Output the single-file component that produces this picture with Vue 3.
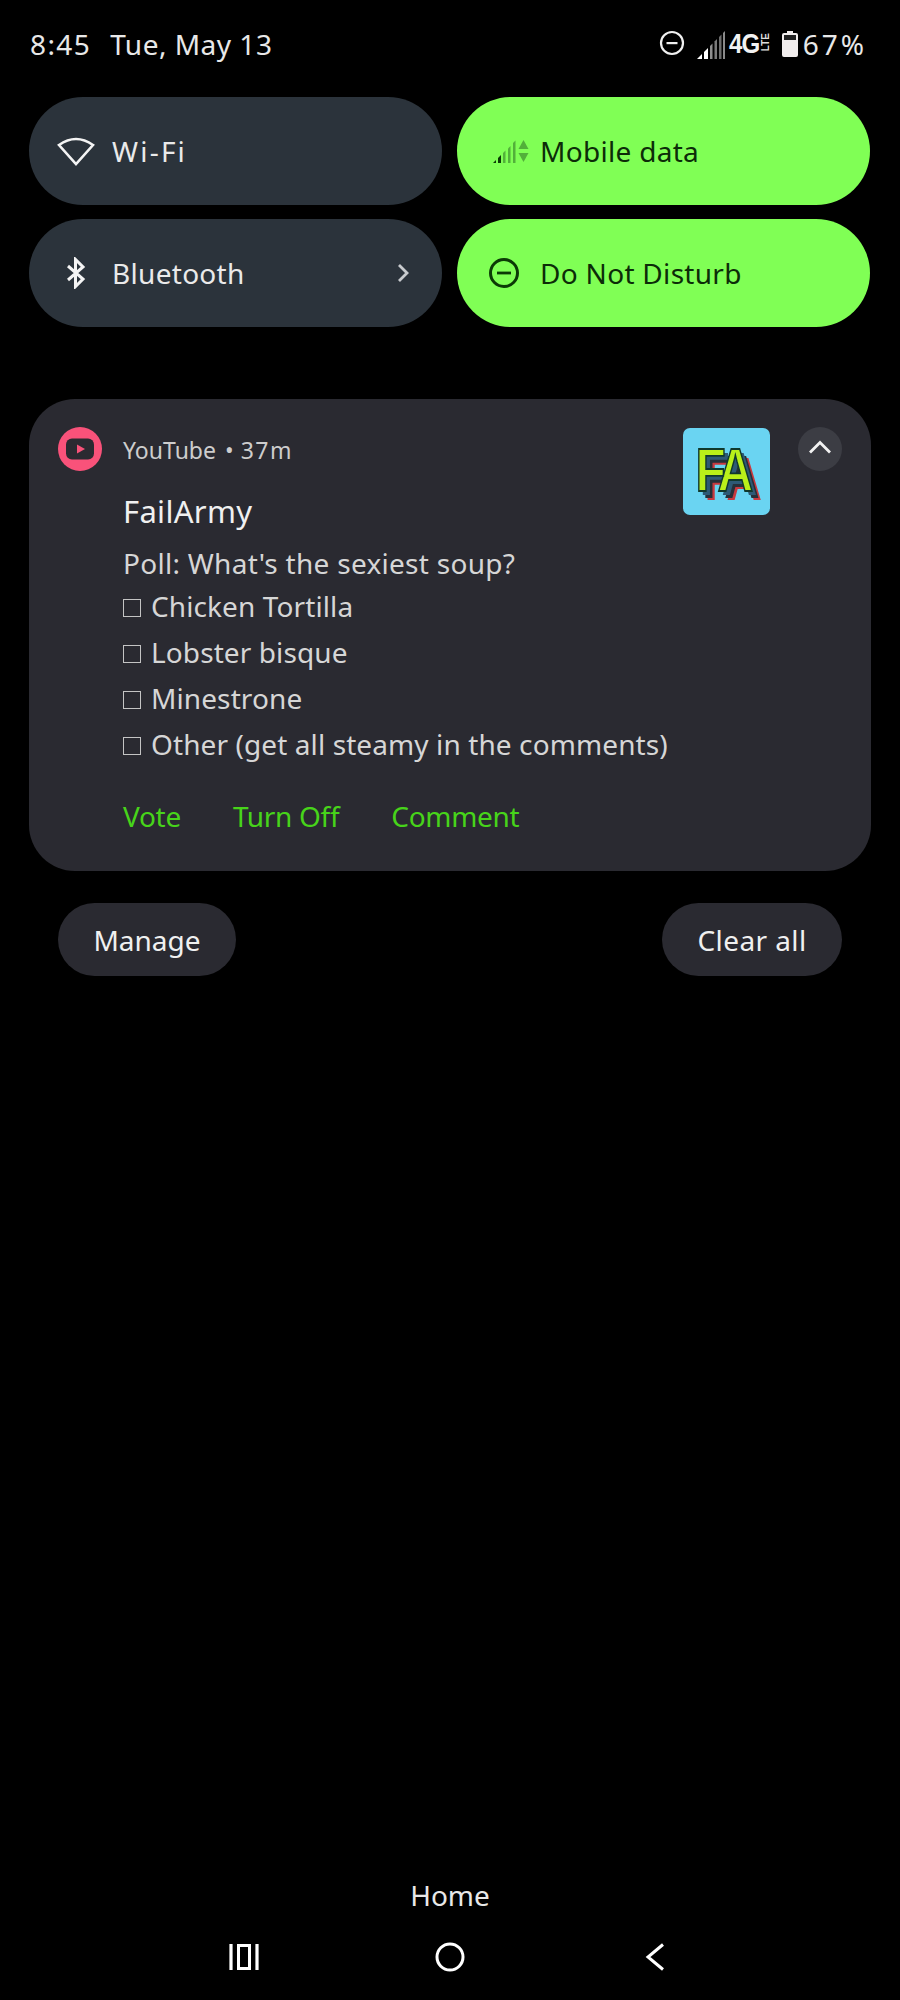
<template>
  <div class="page">
    <div class="status">
      <span class="time">8:45</span>
      <span class="date">Tue, May 13</span>
      <svg class="st-dnd" width="26" height="26" viewBox="0 0 26 26">
        <circle cx="13" cy="13" r="11" fill="none" stroke="#f0f0f0" stroke-width="2.2" />
        <rect x="7.5" y="12" width="11" height="2.2" fill="#f0f0f0" />
      </svg>
      <svg class="st-signal" width="28" height="28" viewBox="0 0 28 28">
        <path d="M0 28 L5 23 V28 Z" fill="#fff" />
        <path d="M7 21 L11 17 V28 H7 Z" fill="#fff" />
        <path d="M13 15 L15.500 12.500 V28 H13 Z" fill="#8e8e8e" />
        <path d="M17.500 10.500 L20 8 V28 H17.500 Z" fill="#7a7a7a" />
        <path d="M22 6 L24.500 3.500 V28 H22 Z" fill="#6d6d6d" />
        <path d="M26 2 L28 0 V28 H26 Z" fill="#8a8a8a" />
      </svg>
      <span class="st-4g">4G</span>
      <span class="st-lte">LTE</span>
      <svg class="st-batt" width="16" height="26" viewBox="0 0 16 26">
        <path d="M5 0 H11 V2 H14 Q16 2 16 4 V24 Q16 26 14 26 H2 Q0 26 0 24 V4 Q0 2 2 2 H5 Z" fill="#f2eeee" />
        <rect x="2" y="4" width="12" height="5" fill="#222" />
      </svg>
      <span class="st-pct">67%</span>
    </div>

    <div class="tiles">
      <div class="tile">
        <div class="tile-icon">
          <svg width="38" height="30" viewBox="0 0 38 30">
            <path d="M2 9 Q19 -3 36 9 L19 28 Z" fill="none" stroke="#f4f4f4" stroke-width="2.600" stroke-linejoin="miter" />
          </svg>
        </div>
        <span class="tile-label wifi">Wi-Fi</span>
      </div>
      <div class="tile on">
        <div class="tile-icon">
          <svg class="mobile-icon" width="36" height="24" viewBox="0 0 36 24">
            <path d="M0 24 L3 21 V24 Z" fill="#0c3a06" />
            <path d="M5 19 L8 16 V24 H5 Z" fill="#0c3a06" />
            <path d="M10 14 L12.500 11.500 V24 H10 Z" fill="#52b03a" />
            <path d="M15 9.500 L17.500 7 V24 H15 Z" fill="#52b03a" />
            <path d="M20 4 L22.500 1.500 V24 H20 Z" fill="#52b03a" />
            <path d="M25.500 10 L30.500 1 L35.500 10 Z" fill="#52b03a" />
            <path d="M25.500 14 L30.500 23 L35.500 14 Z" fill="#52b03a" />
          </svg>
        </div>
        <span class="tile-label">Mobile data</span>
      </div>
      <div class="tile">
        <div class="tile-icon">
          <svg width="20" height="32" viewBox="0 0 20 32">
            <path d="M2 9 L17 22 L9.500 29.500 V2.500 L17 10 L2 23" fill="none" stroke="#f4f4f4" stroke-width="3" stroke-linejoin="miter" />
          </svg>
        </div>
        <span class="tile-label">Bluetooth</span>
        <svg class="tile-more" width="12" height="20" viewBox="0 0 12 20">
          <path d="M2 2 L10 10 L2 18" fill="none" stroke="#c8cbce" stroke-width="2.800" />
        </svg>
      </div>
      <div class="tile on">
        <div class="tile-icon">
          <svg width="32" height="32" viewBox="0 0 32 32">
            <circle cx="16" cy="16" r="13.500" fill="none" stroke="#0c3a06" stroke-width="3" />
            <rect x="9" y="14.600" width="14" height="2.800" fill="#0c3a06" />
          </svg>
        </div>
        <span class="tile-label">Do Not Disturb</span>
      </div>
    </div>

    <div class="card">
      <div class="app-icon">
        <svg width="28" height="22" viewBox="0 0 28 22">
          <rect width="28" height="21" y="0.500" rx="6" fill="#2a2a31" />
          <path d="M11 6.500 L19 11 L11 15.500 Z" fill="#f9527a" />
        </svg>
      </div>
      <div class="card-body">
        <div class="app-line">YouTube<span class="dot">•</span><span class="ago">37m</span></div>
        <div class="title">FailArmy</div>
        <div class="msg first">Poll: What's the sexiest soup?</div>
        <div v-for="opt in options" :key="opt" class="msg opt">
          <span class="box"></span>
          <span>{{ opt }}</span>
        </div>
        <div class="actions">
          <span v-for="a in actions" :key="a">{{ a }}</span>
        </div>
      </div>
      <div class="thumb">
        <span class="fa">FA</span>
      </div>
      <div class="collapse">
        <svg width="24" height="14" viewBox="0 0 24 14">
          <path d="M2 12.500 L12 2.500 L22 12.500" fill="none" stroke="#f2f2f2" stroke-width="2.800" />
        </svg>
      </div>
    </div>

    <div class="footer-btns">
      <div class="pill-btn manage">Manage</div>
      <div class="pill-btn clear">Clear all</div>
    </div>

    <div class="nav">
      <div class="nav-label">Home</div>
      <div class="nav-icons">
        <svg width="30" height="26" viewBox="0 0 30 26">
          <path d="M2 0 V26 M28 0 V26" stroke="#fff" stroke-width="3.200" fill="none" />
          <rect x="9.500" y="1.500" width="11" height="23" stroke="#fff" stroke-width="3" fill="none" />
        </svg>
        <svg width="30" height="30" viewBox="0 0 30 30">
          <circle cx="15" cy="15" r="13" stroke="#fff" stroke-width="3" fill="none" />
        </svg>
        <svg class="back" width="20" height="28" viewBox="0 0 20 28">
          <path d="M18 1.500 L3 14 L18 26.500" stroke="#fff" stroke-width="3" fill="none" />
        </svg>
      </div>
    </div>
  </div>
</template>

<script setup>
const options = [
  "Chicken Tortilla",
  "Lobster bisque",
  "Minestrone",
  "Other (get all steamy in the comments)",
];
const actions = ["Vote", "Turn Off", "Comment"];
</script>

<style>
html,
body {
  background: #000;
}
</style>

<style scoped>
.page {
  width: 900px;
  height: 2000px;
  background: #000;
  display: flex;
  flex-direction: column;
  font-family: "Noto Sans", sans-serif;
  color: #eee;
  overflow: hidden;
}
.status {
  height: 97px;
  padding: 24px 33px 0 30px;
  box-sizing: border-box;
  display: flex;
  align-items: flex-start;
  font-size: 28px;
  line-height: 40px;
  color: #e8e8e8;
}
.time {
  letter-spacing: 1.400px;
}
.date {
  margin-left: 19px;
  margin-right: auto;
  letter-spacing: 0.500px;
}
.st-dnd {
  margin: 6px 12px 0 0;
}
.st-signal {
  margin: 7px -1px 0 0;
}
.st-4g {
  font-family: "Liberation Sans", sans-serif;
  font-weight: 700;
  font-size: 28px;
  letter-spacing: -1px;
  color: #f2f2f2;
  transform: scaleX(0.86);
  transform-origin: right center;
}
.st-lte {
  writing-mode: vertical-rl;
  font-family: "Liberation Sans", sans-serif;
  font-weight: 700;
  font-size: 10px;
  line-height: 12px;
  margin: 9px 10px 0 0;
  transform: rotate(180deg);
  color: #ddd;
}
.st-batt {
  margin: 7px 5px 0 0;
}
.st-pct {
  letter-spacing: 3px;
  font-size: 28px;
}
.tiles {
  margin: 0 29px;
  display: grid;
  grid-template-columns: 413px 413px;
  grid-auto-rows: 108px;
  column-gap: 15px;
  row-gap: 14px;
}
.tile {
  background: #2b333b;
  border-radius: 54px;
  padding-left: 25px;
  display: flex;
  align-items: center;
  font-size: 28px;
  color: #eaeaea;
}
.tile.on {
  background: #80ff55;
  color: #0c2c08;
}
.tile-icon {
  width: 44px;
  margin-right: 14px;
  display: flex;
  justify-content: center;
  align-items: center;
}
.mobile-icon {
  flex-shrink: 0;
  margin-left: 14px;
}
.tile-label {
  flex: 1;
  letter-spacing: 0.300px;
}
.wifi {
  letter-spacing: 2.200px;
}
.tile-more {
  margin-right: 33px;
}
.card {
  margin: 72px 29px 0;
  height: 472px;
  box-sizing: border-box;
  background: #2a2a31;
  border-radius: 46px;
  padding: 28px 29px 0;
  display: flex;
  align-items: flex-start;
}
.app-icon {
  width: 44px;
  height: 44px;
  border-radius: 50%;
  background: #f9527a;
  display: flex;
  align-items: center;
  justify-content: center;
  flex-shrink: 0;
}
.card-body {
  margin-left: 21px;
  flex: 1;
  min-width: 0;
}
.app-line {
  font-size: 23px;
  line-height: 46px;
  color: #cdcdcd;
  display: flex;
}
.dot {
  margin: 0 7px 0 9px;
}
.ago {
  letter-spacing: 1.500px;
}
.title {
  font-size: 31px;
  line-height: 42px;
  margin-top: 17px;
  letter-spacing: 0.300px;
  color: #f0f0f0;
}
.msg {
  font-size: 28px;
  line-height: 46px;
  letter-spacing: 0.100px;
  color: #d6d6d6;
  white-space: nowrap;
}
.first {
  margin-top: 12px;
  line-height: 39px;
  letter-spacing: 0.280px;
}
.opt {
  display: flex;
  align-items: center;
  gap: 10px;
}
.box {
  width: 16px;
  height: 16px;
  border: 1.500px solid #c4c4c4;
  margin-top: 3px;
  flex-shrink: 0;
}
.actions {
  margin-top: 27px;
  display: flex;
  gap: 52px;
  font-size: 28px;
  line-height: 44px;
  letter-spacing: -0.300px;
  color: #47d41a;
}
.thumb {
  width: 87px;
  height: 87px;
  margin-top: 1px;
  border-radius: 7px;
  background: #6ad4f2;
  flex-shrink: 0;
  display: flex;
  align-items: center;
  justify-content: center;
  overflow: hidden;
}
.fa {
  font-family: "Liberation Sans", sans-serif;
  font-weight: 700;
  font-size: 62px;
  line-height: 62px;
  letter-spacing: -7px;
  margin-right: 10px;
  margin-top: -4px;
  color: #b9f01a;
  -webkit-text-stroke: 1.800px #10382c;
  text-shadow: 5px 4px 0 #2d5a76, 8px 7px 0 #26303a, 11px 9px 0 #c8393f;
  transform: scaleX(0.8);
}
.collapse {
  width: 44px;
  height: 44px;
  border-radius: 50%;
  background: #3c3d44;
  margin-left: 28px;
  display: flex;
  align-items: center;
  justify-content: center;
  flex-shrink: 0;
  padding-bottom: 4px;
  box-sizing: border-box;
}
.footer-btns {
  margin: 32px 58px 0;
  display: flex;
  justify-content: space-between;
}
.pill-btn {
  height: 73px;
  border-radius: 37px;
  background: #2a2a31;
  display: flex;
  align-items: center;
  justify-content: center;
  font-size: 28px;
  color: #f0f0f0;
}
.manage {
  width: 178px;
}
.clear {
  width: 180px;
  letter-spacing: 0.400px;
}
.nav {
  margin-top: auto;
  padding-bottom: 28px;
}
.nav-label {
  text-align: center;
  font-size: 28px;
  line-height: 40px;
  color: #e8e8e8;
}
.nav-icons {
  margin-top: 27px;
  height: 30px;
  display: flex;
  align-items: center;
  gap: 176px;
  padding-left: 229px;
}
.back {
  margin-left: 4px;
}
</style>
